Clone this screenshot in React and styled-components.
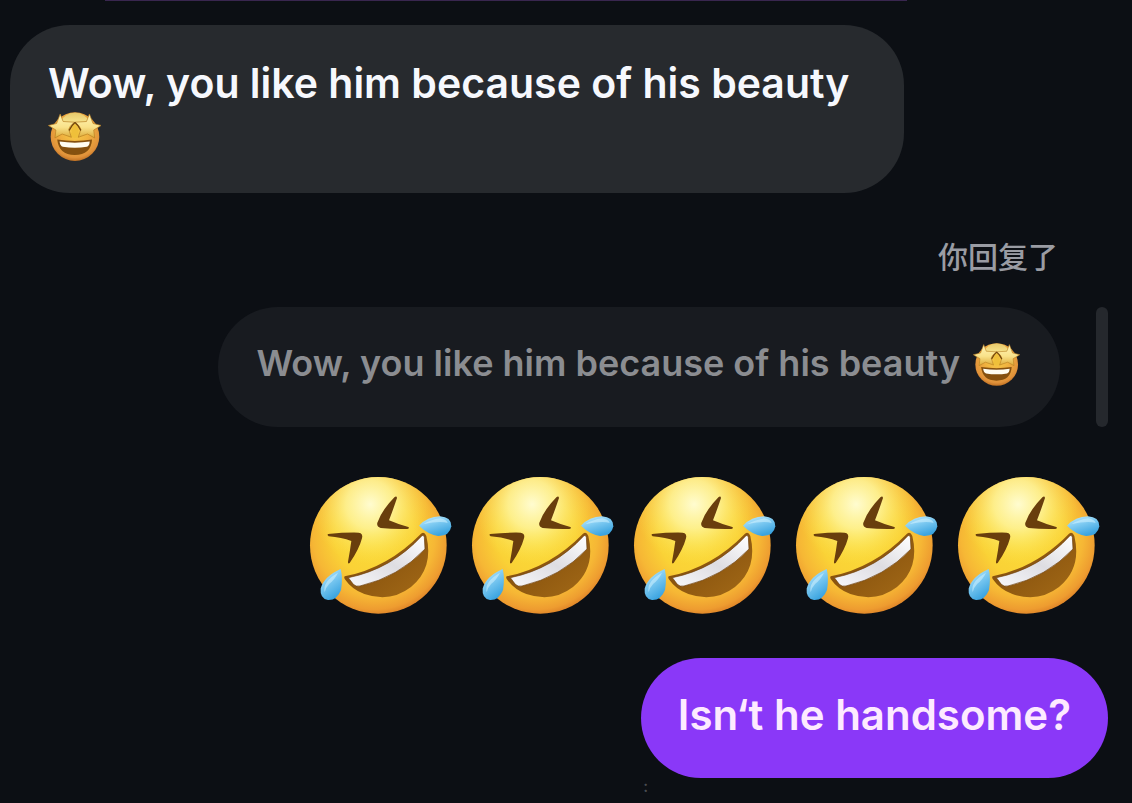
import React from "react";
import styled, { createGlobalStyle } from "styled-components";

const StarStruck = () => (
  <InlineEmoji viewBox="27 30 162 156" role="img" aria-label="star-struck">
    <defs>
      <radialGradient id="starFace" cx="0.5" cy="0.4" r="0.62">
        <stop offset="0" stopColor="#f7cf4a" />
        <stop offset="0.5" stopColor="#efae3e" />
        <stop offset="0.85" stopColor="#e0913a" />
        <stop offset="1" stopColor="#b8691d" />
      </radialGradient>
      <linearGradient id="starTop" x1="0" y1="0" x2="0" y2="1">
        <stop offset="0" stopColor="#e6c86a" />
        <stop offset="1" stopColor="#f8e68e" />
      </linearGradient>
      <linearGradient id="starFill" x1="0" y1="0" x2="0" y2="1">
        <stop offset="0" stopColor="#fff3b4" />
        <stop offset="0.55" stopColor="#f9e28a" />
        <stop offset="1" stopColor="#dca935" />
      </linearGradient>
    </defs>
    <circle cx="109" cy="108" r="74" fill="url(#starFace)" />
    <path d="M62 64 Q80 35 109 35 Q138 35 156 64 Q109 72 62 64 Z" fill="url(#starTop)" />
    <path
      d="M109 66 Q96 80 99 94 L92 108 L109 112 L126 108 L119 94 Q122 80 109 66 Z"
      fill="#efc03a"
    />
    <path
      d="M64 39 L73 62 L107 64 Q91 78 90 86 L98 110 L70 100 L48 112 L51 88 L28 74 L53 68 Z"
      fill="url(#starFill)"
      stroke="#b67c20"
      strokeWidth="2"
      strokeLinejoin="round"
    />
    <path
      d="M153 39 L144 62 L110 64 Q126 78 127 86 L119 110 L147 100 L169 112 L166 88 L189 74 L164 68 Z"
      fill="url(#starFill)"
      stroke="#b67c20"
      strokeWidth="2"
      strokeLinejoin="round"
    />
    <path
      d="M92 88 Q98 74 109 65 Q120 74 126 88"
      fill="none"
      stroke="#70450e"
      strokeWidth="4"
      strokeLinecap="round"
    />
    <path
      d="M55 117 Q109 125 161 117 Q158 164 108 164 Q60 164 55 117 Z"
      fill="#85500f"
    />
    <path
      d="M62 123 Q109 130 154 123 Q153 137 145 139 Q109 145 72 139 Q64 137 62 123 Z"
      fill="#fffdf2"
    />
  </InlineEmoji>
);

const Rofl = () => (
  <BigEmoji viewBox="24 30 432 420" role="img" aria-label="rolling on the floor laughing">
    <defs>
      <radialGradient id="roflFace" cx="0.47" cy="0.43" r="0.58">
        <stop offset="0" stopColor="#fbdc38" />
        <stop offset="0.5" stopColor="#fad236" />
        <stop offset="0.77" stopColor="#f6b735" />
        <stop offset="0.93" stopColor="#ee9c30" />
        <stop offset="1" stopColor="#df8428" />
      </radialGradient>
      <radialGradient id="roflShine" cx="0.44" cy="0.2" r="0.44">
        <stop offset="0" stopColor="#fffcd0" />
        <stop offset="0.4" stopColor="#fef49a" stopOpacity="0.85" />
        <stop offset="1" stopColor="#fce34b" stopOpacity="0" />
      </radialGradient>
      <linearGradient id="roflMouth" x1="0" y1="0" x2="1" y2="1">
        <stop offset="0" stopColor="#7a4609" />
        <stop offset="1" stopColor="#a36a17" />
      </linearGradient>
      <linearGradient id="roflTeeth" x1="0" y1="1" x2="1" y2="0">
        <stop offset="0" stopColor="#f7f7fa" />
        <stop offset="0.5" stopColor="#dedde2" />
        <stop offset="1" stopColor="#ffffff" />
      </linearGradient>
      <linearGradient id="roflTear" x1="0" y1="0" x2="0.5" y2="1">
        <stop offset="0" stopColor="#c7efff" />
        <stop offset="0.45" stopColor="#83cdf3" />
        <stop offset="1" stopColor="#3ba4e0" />
      </linearGradient>
    </defs>
    <circle cx="235" cy="241" r="205" fill="url(#roflFace)" />
    <circle cx="235" cy="241" r="205" fill="url(#roflShine)" />
    <path
      d="M84 207 Q136 202 176 203 Q190 205 186 220 Q177 254 149 294 Q143 298 144 290 Q150 258 154 228 Q125 217 86 214 Q80 210 84 207 Z"
      fill="#693e0d"
    />
    <path
      d="M284 96 Q290 92 291 99 Q280 132 267 166 Q294 178 325 186 Q330 190 322 192 Q279 193 242 189 Q229 185 232 173 Q246 134 284 96 Z"
      fill="#693e0d"
    />
    <path
      d="M134 334 Q264 308 363 206 Q373 198 379 213 Q402 309 333 366 Q271 414 193 387 Q156 374 134 342 Q131 336 134 334 Z"
      fill="url(#roflMouth)"
    />
    <path
      d="M145 338 Q274 312 366 212 Q371 208 373 217 L375 252 Q296 336 180 363 Q168 366 160 358 Z"
      fill="url(#roflTeeth)"
      stroke="#6c400d"
      strokeWidth="2"
    />
    <path
      d="M357 182 Q382 155 420 154 Q454 156 454 184 Q449 214 414 213 Q382 207 357 182 Z"
      fill="url(#roflTear)"
    />
    <path
      d="M370 178 Q391 164 421 160 Q440 163 443 174 Q420 166 370 178 Z"
      fill="#d9f6ff"
      opacity="0.5"
    />
    <path
      d="M122 312 Q129 340 123 375 Q111 406 84 405 Q59 400 62 371 Q72 334 122 312 Z"
      fill="url(#roflTear)"
    />
    <path
      d="M114 323 Q104 344 88 356 Q78 366 74 382 Q66 350 114 323 Z"
      fill="#d9f6ff"
      opacity="0.5"
    />
  </BigEmoji>
);

const App = () => {
  return (
    <>
      <GlobalStyle />
      <Chat>
        <PreviousEdge />
        <Received>
          Wow, you like him because of his beauty <StarStruck />
        </Received>
        <ReplyLabel>你回复了</ReplyLabel>
        <QuoteRow>
          <Quote>
            Wow, you like him because of his beauty <StarStruck />
          </Quote>
          <QuoteBar />
        </QuoteRow>
        <EmojiRow>
          <Rofl />
          <Rofl />
          <Rofl />
          <Rofl />
          <Rofl />
        </EmojiRow>
        <Sent>Isn‘t he handsome?</Sent>
        <Mark>:</Mark>
      </Chat>
    </>
  );
};

export default App;

const GlobalStyle = createGlobalStyle`
  * {
    box-sizing: border-box;
  }
  body {
    margin: 0;
    background: #0c0f14;
    font-family: Inter, "Noto Sans CJK SC", sans-serif;
    font-weight: 500;
  }
`;
const Chat = styled.main`
  display: flex;
  flex-direction: column;
  align-items: flex-end;
  padding: 0 24px 0 10px;
`;
const PreviousEdge = styled.div`
  align-self: flex-start;
  width: 73%;
  height: 1px;
  margin: 0 0 24px 95px;
  background: #39264f;
`;
const InlineEmoji = styled.svg`
  width: 1.3em;
  height: 1.25em;
  margin: -4px 0;
  vertical-align: -0.2em;
`;
const Bubble = styled.p`
  margin: 0;
  padding: 32px 38px;
  border-radius: 60px;
  font-weight: 600;
  line-height: 52px;
`;
const Received = styled(Bubble)`
  align-self: flex-start;
  max-width: 894px;
  background: #272a2e;
  color: #f6f8fd;
  font-size: 41px;
`;
const Sent = styled(Bubble)`
  padding: 31px 37px 37px;
  background: #8a38f8;
  color: #fdeaff;
  font-size: 42px;
`;
const ReplyLabel = styled.div`
  margin: 42px 50px 28px 0;
  color: #9a9ca3;
  font-size: 30px;
  line-height: 44px;
`;
const QuoteRow = styled.div`
  display: flex;
  gap: 36px;
`;
const Quote = styled(Bubble)`
  padding-top: 30px;
  padding-bottom: 38px;
  background: #181b20;
  color: #8b8d91;
  font-size: 36px;

  ${InlineEmoji} {
    margin: -4px 2px -4px 4px;
  }
`;
const QuoteBar = styled.div`
  width: 12px;
  border-radius: 6px;
  background: #25282d;
`;
const EmojiRow = styled.div`
  display: flex;
  gap: 18px;
  margin: 48px 8px 43px 0;
`;
const BigEmoji = styled.svg`
  display: block;
  width: 144px;
  height: 140px;
`;
const Mark = styled.small`
  margin-right: 460px;
  color: #4a4d52;
  font-size: 16px;
  line-height: 16px;
`;
